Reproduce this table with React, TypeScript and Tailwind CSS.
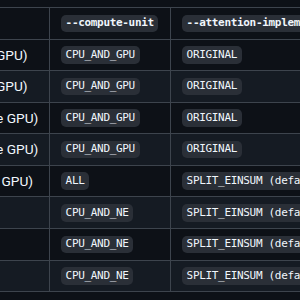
import React from "react";

interface Row {
  device: string;
  unit: string;
  attention: string;
}

const rows: Row[] = [
  { device: "Mac Studio (M1 Ultra, 64-core GPU)", unit: "CPU_AND_GPU", attention: "ORIGINAL" },
  { device: "Mac Studio (M1 Ultra, 48-core GPU)", unit: "CPU_AND_GPU", attention: "ORIGINAL" },
  { device: "MacBook Pro (M1 Max, 32-core GPU)", unit: "CPU_AND_GPU", attention: "ORIGINAL" },
  { device: "MacBook Pro (M1 Max, 24-core GPU)", unit: "CPU_AND_GPU", attention: "ORIGINAL" },
  { device: "MacBook Pro (M1 Pro, 16-core GPU)", unit: "ALL", attention: "SPLIT_EINSUM (default)" },
  { device: "MacBook Pro (M2)", unit: "CPU_AND_NE", attention: "SPLIT_EINSUM (default)" },
  { device: "MacBook Pro (M1)", unit: "CPU_AND_NE", attention: "SPLIT_EINSUM (default)" },
  { device: "iPad Pro (M1)", unit: "CPU_AND_NE", attention: "SPLIT_EINSUM (default)" },
];

const Code: React.FC<{ children: React.ReactNode; bold?: boolean }> = ({ children, bold }) => (
  <code
    className={`inline-flex h-[17.5px] items-center whitespace-nowrap rounded-[5px] bg-[#2a2f37] px-[4.6px] font-['DejaVu_Sans_Mono',monospace] text-[11px] tracking-[-0.32px] text-[#f0f6fc] ${
      bold ? "font-bold" : ""
    }`}
  >
    {children}
  </code>
);

const App: React.FC = () => {
  return (
    <div className="h-[300px] w-[300px] overflow-hidden bg-[#0d1117] pt-[7px] font-['Roboto','Liberation_Sans',sans-serif] text-[13.7px] text-[#f0f6fc]">
      <div className="ml-[-206px] w-[640px] border-t border-[#3d444d]">
        {/* header */}
        <div className="flex h-[31.5px] border-b border-[#3d444d]">
          <div className="flex w-[256px] shrink-0 items-center border-r border-[#3d444d] pl-[18px] pr-[11px] font-bold whitespace-nowrap">
            Device
          </div>
          <div className="flex w-[121px] shrink-0 items-center border-r border-[#3d444d] px-[11px]">
            <Code bold>--compute-unit</Code>
          </div>
          <div className="flex flex-1 items-center px-[11px]">
            <Code bold>--attention-implementation</Code>
          </div>
        </div>
        {/* body */}
        {rows.map((r, i) => (
          <div
            key={i}
            className={`flex h-[31.6px] border-b border-[#3d444d] ${i % 2 === 1 ? "bg-[#151b23]" : ""}`}
          >
            <div className="flex w-[256px] shrink-0 items-center overflow-hidden border-r border-[#3d444d] pl-[18px] pr-[11px] whitespace-nowrap">
              {r.device}
            </div>
            <div className="flex w-[121px] shrink-0 items-center border-r border-[#3d444d] px-[11px]">
              <Code>{r.unit}</Code>
            </div>
            <div className="flex flex-1 items-center px-[11px]">
              <Code>{r.attention}</Code>
            </div>
          </div>
        ))}
      </div>
    </div>
  );
};

export default App;
